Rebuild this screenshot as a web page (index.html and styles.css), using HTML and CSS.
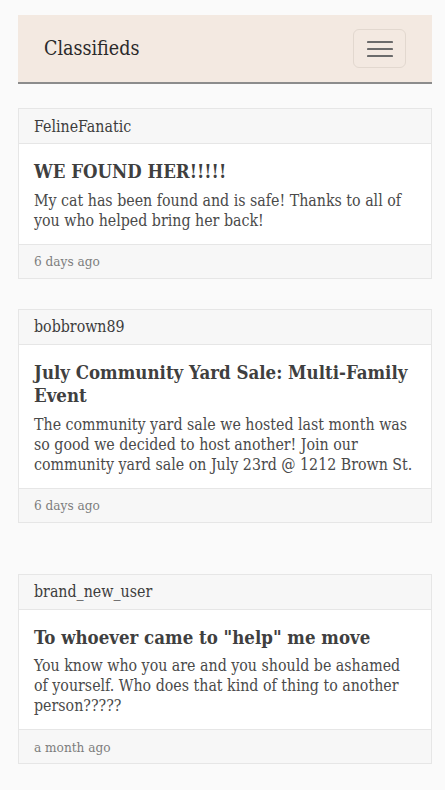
FILE: index.html
```html
<!DOCTYPE html>
<html lang="en">
<head>
<meta charset="utf-8">
<title>Classifieds</title>
<link rel="stylesheet" href="styles.css">
</head>
<body>
<div class="page">
  <nav class="navbar">
    <span class="brand">Classifieds</span>
    <button class="toggler" aria-label="Toggle navigation">
      <svg width="26" height="18" viewBox="0 0 26 18"><path d="M1 2h24M1 9h24M1 16h24" stroke="#6b6b6b" stroke-width="2.2" stroke-linecap="round"/></svg>
    </button>
  </nav>

  <div class="card first">
    <div class="card-header">FelineFanatic</div>
    <div class="card-body">
      <h5 class="card-title">WE FOUND HER!!!!!</h5>
      <p class="card-text">My cat has been found and is safe! Thanks to all of you who helped bring her back!</p>
    </div>
    <div class="card-footer">6 days ago</div>
  </div>

  <div class="card second">
    <div class="card-header">bobbrown89</div>
    <div class="card-body">
      <h5 class="card-title">July Community Yard Sale: Multi-Family Event</h5>
      <p class="card-text">The community yard sale we hosted last month was so good we decided to host another! Join our community yard sale on July 23rd @ 1212 Brown St.</p>
    </div>
    <div class="card-footer">6 days ago</div>
  </div>

  <div class="card third">
    <div class="card-header">brand_new_user</div>
    <div class="card-body">
      <h5 class="card-title">To whoever came to "help" me move</h5>
      <p class="card-text">You know who you are and you should be ashamed of yourself. Who does that kind of thing to another person?????</p>
    </div>
    <div class="card-footer">a month ago</div>
  </div>
</div>
</body>
</html>
```
FILE: styles.css
```css
* { box-sizing: border-box; }
html, body { margin: 0; padding: 0; }
body {
  background: #fafafa;
  font-family: "DejaVu Serif Condensed", "DejaVu Serif", serif;
  color: #3a3a3a;
}
.page {
  padding: 15px 13px 20px 18px;
  display: flex;
  flex-direction: column;
}
.navbar {
  height: 69px;
  background: #f3e9e1;
  border-bottom: 2px solid #8c8c8c;
  display: flex;
  align-items: center;
  justify-content: space-between;
  padding: 0 26px 0 26px;
}
.brand {
  font-size: 19.5px;
  color: #2a2a2a;
}
.toggler {
  width: 53px;
  height: 39px;
  border: 1px solid #e2d8cf;
  border-radius: 6px;
  background: transparent;
  display: flex;
  align-items: center;
  justify-content: center;
  padding: 0;
}
.card {
  background: #fff;
  border: 1px solid #e6e6e6;
}
.first { margin-top: 24px; }
.second { margin-top: 30px; }
.third { margin-top: 51px; }
.card-header {
  background: #f7f7f7;
  border-bottom: 1px solid #e6e6e6;
  padding: 0 15px;
  height: 35px;
  display: flex;
  align-items: center;
  font-size: 15.8px;
  color: #3d3d3d;
}
.card-body {
  padding: 16px 15px 13px;
}
.card-title {
  margin: 0 0 7px;
  font-size: 18.5px;
  font-weight: bold;
  line-height: 23.5px;
  color: #3f3f3f;
}
.card-text {
  margin: 0;
  font-size: 15.8px;
  line-height: 20px;
  color: #4a4a4a;
}
.card-footer {
  background: #f7f7f7;
  border-top: 1px solid #e6e6e6;
  padding: 0 15px;
  height: 34px;
  display: flex;
  align-items: center;
  font-size: 13.5px;
  color: #7d7d7d;
}
```
